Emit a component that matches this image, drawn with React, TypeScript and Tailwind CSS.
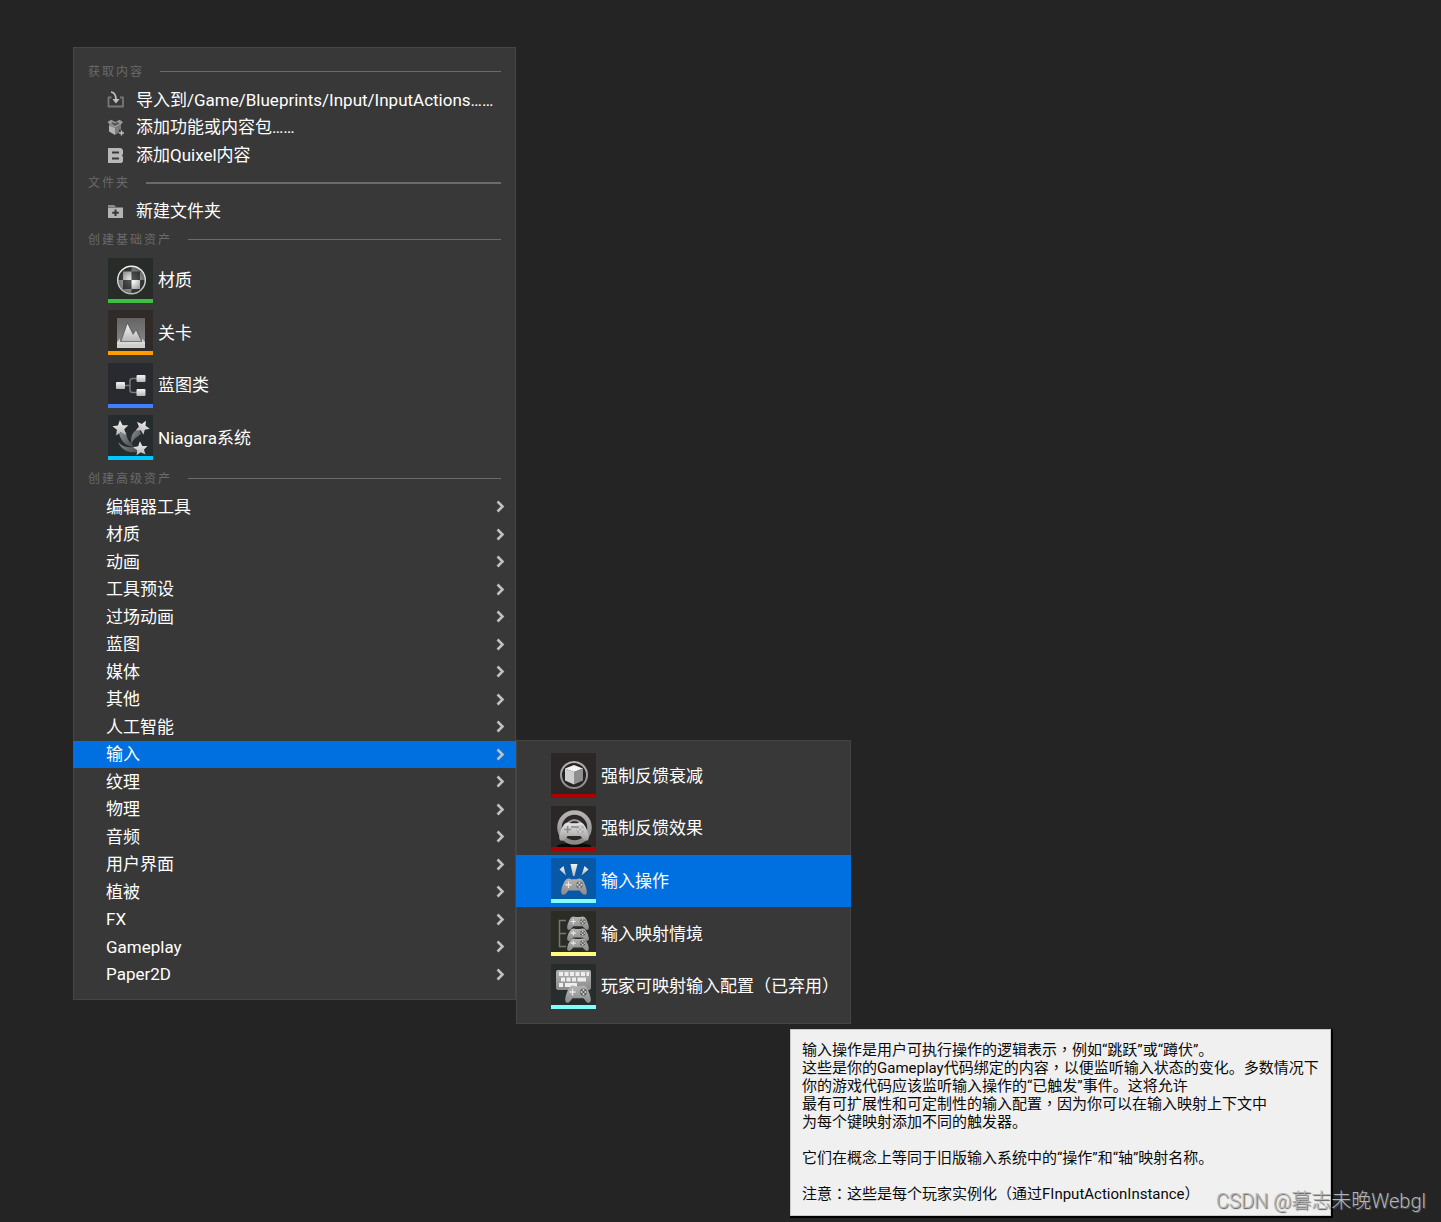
import React, { ReactNode } from "react";

function Gradients() {
  return (
    <svg className="absolute size-0" aria-hidden="true">
      <defs>
        <linearGradient id="silver" x1="0" y1="0" x2="0" y2="1">
          <stop offset="0" stopColor="#b4b4b4" />
          <stop offset="1" stopColor="#8a8a8a" />
        </linearGradient>
        <linearGradient id="bright" x1="0" y1="0" x2="0" y2="1">
          <stop offset="0" stopColor="#f4f4f4" />
          <stop offset="1" stopColor="#b8b8b8" />
        </linearGradient>
        <linearGradient id="shell" x1="0" y1="0" x2="0" y2="1">
          <stop offset="0" stopColor="#e6e6e6" />
          <stop offset="1" stopColor="#9c9c9c" />
        </linearGradient>
        <linearGradient id="frame" x1="0" y1="0" x2="0" y2="1">
          <stop offset="0" stopColor="#646464" />
          <stop offset="1" stopColor="#8c8c8c" />
        </linearGradient>
        <radialGradient id="gloss" cx=".5" cy=".5" r=".5">
          <stop offset=".2" stopColor="#000000" stopOpacity="0" />
          <stop offset="1" stopColor="#000000" stopOpacity=".45" />
        </radialGradient>
        <linearGradient id="trail" x1="0" y1="0" x2="1" y2="1">
          <stop offset="0" stopColor="#8c9090" />
          <stop offset="1" stopColor="#454a4c" />
        </linearGradient>
      </defs>
    </svg>
  );
}

type PadProps = { x: number; y: number; w: number; h: number; bg: string; fill?: string; mark?: string };

function Pad({ x, y, w, h, bg, fill = "url(#silver)", mark = "#e6e6e6" }: PadProps) {
  return (
    <svg x={x} y={y} width={w} height={h} viewBox="0 0 26 16" preserveAspectRatio="none">
      <path
        d="M5 1.5C6.500 .3 9 .2 10 1.200H16C17 .2 19.500 .3 21 1.500C23.500 4 25.500 9.500 25.800 12.500C26 16 23.500 16.800 21.300 14.800L18.500 11.800H7.500L4.700 14.800C2.500 16.800 0 16 .2 12.500C.5 9.500 2.500 4 5 1.500Z"
        fill={fill}
      />
      <path d="M7.500 3.300V9.300M4.500 6.300H10.500" stroke={mark} strokeWidth="1.300" />
      <circle cx="18.500" cy="6.300" r="3.300" fill={bg} />
      <g fill="#d8d8d8">
        <circle cx="18.500" cy="4.400" r="1" />
        <circle cx="18.500" cy="8.200" r="1" />
        <circle cx="16.600" cy="6.300" r="1" />
        <circle cx="20.400" cy="6.300" r="1" />
      </g>
    </svg>
  );
}

const STAR = "M0-8L2.300-2.700L8-2.200L3.700 1.600L5 7.200L0 4.200L-5 7.200L-3.700 1.600L-8-2.200L-2.300-2.700Z";

const art = {
  material: (
    <>
      <clipPath id="ball">
        <circle cx="23.500" cy="22" r="13" />
      </clipPath>
      <g clipPath="url(#ball)">
        <rect x="8" y="8" width="30" height="30" fill="#4c504e" />
        <rect x="15" y="13.500" width="8.500" height="8.500" fill="#dcdcdc" />
        <rect x="23.500" y="22" width="8.500" height="9" fill="#f4f4f4" />
        <rect x="8" y="22" width="7" height="9" fill="#c5c5c5" />
        <rect x="32" y="13.500" width="7" height="8.500" fill="#b8b8b8" />
        <rect x="23.500" y="7" width="8.500" height="6.500" fill="#a8a8a8" />
        <rect x="15" y="31" width="8.500" height="7" fill="#c0c0c0" />
        <circle cx="23.500" cy="22" r="13.500" fill="url(#gloss)" />
      </g>
      <circle cx="23.500" cy="22" r="13.800" fill="none" stroke="url(#bright)" strokeWidth="1.500" />
    </>
  ),
  level: (
    <>
      <rect x="9" y="8" width="28" height="29" fill="url(#frame)" />
      <path d="M9 32L12 28.500V32H34V28.500L37 32V38H9Z" fill="#cfcfcf" />
      <path d="M9 33H37" stroke="#e4e4e4" />
      <path d="M12 31.500H34.500L29 19L25 22L19.500 11.500Z" fill="#5a5a5a" opacity=".5" />
      <path d="M13.500 31L19.500 14L25 25L28 20.500L33 31Z" fill="url(#bright)" />
    </>
  ),
  blueprint: (
    <>
      <path d="M17 22.500H22M29 15.500H24.500Q22 15.500 22 18V27Q22 29.500 24.500 29.500H29" fill="none" stroke="#77777b" strokeWidth="1.500" />
      <g fill="url(#bright)">
        <rect x="8" y="19" width="9" height="7" rx="1" />
        <rect x="28.500" y="12" width="9" height="7" rx="1" />
        <rect x="28.500" y="26" width="9" height="7" rx="1" />
      </g>
    </>
  ),
  niagara: (
    <>
      <path d="M11 18C13 27 18 31 26 32L24 29C20 26 18.500 22 18 17Z" fill="url(#trail)" />
      <path d="M31 14C25 16 22 21 23.500 29C25 24 29 22 33 19Z" fill="url(#trail)" />
      <path d="M10 27C14 36 22 39 31 36.500L28 31.500C21 33.500 14 32 10 27Z" fill="url(#trail)" />
      <g fill="url(#bright)">
        <path d={STAR} transform="translate(12.500 13) rotate(-4)" />
        <path d={STAR} transform="translate(34.500 12) rotate(28) scale(.9)" />
        <path d={STAR} transform="translate(32.500 33.500) rotate(-5) scale(.9)" />
      </g>
    </>
  ),
  attenuation: (
    <>
      <circle cx="23" cy="22" r="13" fill="#262323" stroke="url(#silver)" strokeWidth="2" />
      <path d="M23 12L32 15.500L23 19L14 15.500Z" fill="#f4f4f4" />
      <path d="M14 15.500L23 19V31.500L14 27.500Z" fill="#cfcfcf" />
      <path d="M32 15.500L23 19V31.500L32 27.500Z" fill="#8f8f8f" />
    </>
  ),
  effect: (
    <>
      <ellipse cx="23" cy="40" rx="17" ry="3" fill="#0b0909" />
      <circle cx="23.500" cy="21.500" r="15" fill="none" stroke="url(#silver)" strokeWidth="4.500" />
      <path d="M15 20C16 11 31 11 32 20Z" fill="#9a9a9a" />
      <path d="M19 17C20.500 14.500 26.500 14.500 28 17Z" fill="#2c2727" />
      <Pad x={8} y={16} w={30} h={19} bg="#a8a8a8" fill="url(#shell)" mark="#8a8a8a" />
      <path d="M20 21H27" stroke="#8a8a8a" strokeWidth="1.500" />
    </>
  ),
  action: (
    <>
      <g fill="url(#bright)">
        <path d="M19.500 6H26.500L23.500 18H22Z" />
        <path d="M8.500 11.500L12.500 8L15 17.500Z" />
        <path d="M33.500 8L37.500 11.500L30.500 17.500Z" />
      </g>
      <Pad x={10} y={20} w={26} h={17} bg="#626a70" />
    </>
  ),
  mapping: (
    <>
      <path d="M15 9.500H8.500V35.500H15M8.500 22.500H15" fill="none" stroke="#77776f" strokeWidth="1.500" />
      <Pad x={16} y={27} w={22} h={13} bg="#55554f" />
      <Pad x={16} y={17} w={22} h={13} bg="#55554f" />
      <Pad x={16} y={5} w={22} h={14} bg="#55554f" />
    </>
  ),
  config: (
    <>
      <rect x="5" y="6" width="35" height="20" rx="2" fill="url(#silver)" />
      <path d="M8 10H38M10 15.500H29M8 21H12" stroke="#eeeeee" strokeWidth="4" strokeDasharray="4 1.500" />
      <path d="M29 15.500H35M14 21H26" stroke="#eeeeee" strokeWidth="4" />
      <Pad x={14} y={21} w={26} h={18} bg="#4f5555" />
    </>
  ),
};

type AssetItem = { label: string; art: ReactNode; tile: string; bar: string; active?: boolean };

const basicAssets: AssetItem[] = [
  { label: "材质", art: art.material, tile: "bg-[#272c29]", bar: "bg-[#40c040]" },
  { label: "关卡", art: art.level, tile: "bg-[#302b28]", bar: "bg-[#ff9c00]" },
  { label: "蓝图类", art: art.blueprint, tile: "bg-[#282a30]", bar: "bg-[#4080ff]" },
  { label: "Niagara系统", art: art.niagara, tile: "bg-[#262c2e]", bar: "bg-[#00c8ff]" },
];

const inputAssets: AssetItem[] = [
  { label: "强制反馈衰减", art: art.attenuation, tile: "bg-[#2c2727]", bar: "bg-[#af0000]" },
  { label: "强制反馈效果", art: art.effect, tile: "bg-[#2c2727]", bar: "bg-[#af0000]" },
  { label: "输入操作", art: art.action, tile: "bg-[#0858a8]", bar: "bg-[#7fffff]", active: true },
  { label: "输入映射情境", art: art.mapping, tile: "bg-[#2c2c27]", bar: "bg-[#ffff7f]" },
  { label: "玩家可映射输入配置（已弃用）", art: art.config, tile: "bg-[#272c2c]", bar: "bg-[#7fffff]" },
];

const categories = [
  "编辑器工具", "材质", "动画", "工具预设", "过场动画", "蓝图", "媒体", "其他", "人工智能",
  "输入", "纹理", "物理", "音频", "用户界面", "植被", "FX", "Gameplay", "Paper2D",
];

function Section({ title, height = "h-[29px]", line = "h-px" }: { title: string; height?: string; line?: string }) {
  return (
    <div className={`flex items-center gap-4 px-[15px] ${height}`}>
      <h2 className="text-xs tracking-[2px] whitespace-nowrap text-[#6a6a6a]">{title}</h2>
      <div className={`flex-1 bg-[#6b6b6b] ${line}`} />
    </div>
  );
}

function IconItem({ label, children }: { label: string; children: ReactNode }) {
  return (
    <button type="button" className="flex w-full items-center gap-3 pl-[34px] text-left whitespace-nowrap">
      <svg viewBox="0 0 17 17" className="size-[17px] shrink-0" aria-hidden="true">
        {children}
      </svg>
      {label}
    </button>
  );
}

function AssetRow({ item }: { item: AssetItem }) {
  return (
    <button
      type="button"
      className={`flex w-full items-center gap-[5px] pl-[35px] text-left whitespace-nowrap ${item.active ? "bg-[#0070e0]" : ""}`}
    >
      <span className={`flex size-[45px] shrink-0 flex-col justify-end ${item.tile}`}>
        <svg viewBox="0 0 45 41" className="h-[41px] w-[45px]" aria-hidden="true">
          {item.art}
        </svg>
        <span className={`h-1 ${item.bar}`} />
      </span>
      {item.label}
    </button>
  );
}

function InputSubmenu() {
  return (
    <div className="absolute -top-px left-full grid h-[284px] w-[335px] auto-rows-fr bg-[#383838] pt-[10px] pb-[11px] shadow-[inset_0_0_0_1px_#454545]">
      {inputAssets.map((item) => (
        <AssetRow key={item.label} item={item} />
      ))}
    </div>
  );
}

/* Full-width comma and colon are centred in their cell. */
function Mid({ children }: { children: string }) {
  return (
    <span lang="zh-TW" className="font-[Roboto,'Noto_Sans_CJK_TC',sans-serif]">
      {children}
    </span>
  );
}

function Tooltip() {
  return (
    <div
      role="tooltip"
      className="absolute top-[1029px] left-[790px] border border-[#c8c8c8] bg-[#f0f0f0] px-[11px] pt-[11px] pb-3 text-[15px] leading-[18px] whitespace-nowrap text-[#0a0a0a] shadow-[1px_1px_0_1px_#000000]"
    >
      <p>输入操作是用户可执行操作的逻辑表示<Mid>，</Mid>例如“跳跃”或“蹲伏”。</p>
      <p>这些是你的Gameplay代码绑定的内容<Mid>，</Mid>以便监听输入状态的变化。多数情况下</p>
      <p>你的游戏代码应该监听输入操作的“已触发”事件。这将允许</p>
      <p>最有可扩展性和可定制性的输入配置<Mid>，</Mid>因为你可以在输入映射上下文中</p>
      <p>为每个键映射添加不同的触发器。</p>
      <br />
      <p>它们在概念上等同于旧版输入系统中的“操作”和“轴”映射名称。</p>
      <br />
      <p>注意<Mid>：</Mid>这些是每个玩家实例化（通过FInputActionInstance）</p>
    </div>
  );
}

export default function App() {
  return (
    <main
      lang="zh-CN"
      className="relative min-h-screen overflow-hidden bg-[#242424] pt-[47px] pl-[73px] font-[Roboto,'Noto_Sans_CJK_SC',sans-serif] text-[17px] leading-6 text-white"
    >
      <Gradients />
      <nav className="w-[443px] bg-[#383838] pt-[10px] pb-3 shadow-[inset_0_0_0_1px_#454545]">
        <Section title="获取内容" />
        <div className="grid h-[83px] auto-rows-fr">
          <IconItem label="导入到/Game/Blueprints/Input/InputActions……">
            <path d="M4.500 6.500H1.500V15.500H16V6.500H13" fill="none" stroke="#777777" strokeWidth="1.800" strokeLinejoin="round" />
            <path d="M4 1C7.500 1.500 9 4 9 9" fill="none" stroke="#c0c0c0" strokeWidth="1.700" />
            <path d="M5.500 8H12.500L9 12.500Z" fill="#c0c0c0" />
          </IconItem>
          <IconItem label="添加功能或内容包……">
            <path d="M2 6L8 9V16L2 12.500Z" fill="#b4b4b4" />
            <path d="M8 9L14 6V10.500H12V13.500L8 16Z" fill="#7c7c7c" />
            <path d="M.5 3L4 .8L8.500 3L12.500 .8L16 3L13.500 6L8 9L3 6Z" fill="#9a9a9a" />
            <path d="M4 4.500L6 3L8 4.500L10.500 3L12.500 4.500L8 7Z" fill="#555555" />
            <path d="M14.500 11.500V16.500M12 14H17" stroke="#c0c0c0" strokeWidth="1.500" />
          </IconItem>
          <IconItem label="添加Quixel内容">
            <path fillRule="evenodd" d="M1 1H14L16 3V7L15 8.500L16 10V14.500L14.500 16H1ZM5 4.500V6.500H12V4.500ZM5 10.500V12.500H12V10.500Z" fill="#b8b8b8" />
          </IconItem>
        </div>
        <Section title="文件夹" height="h-7" line="h-0.5" />
        <div className="grid h-7">
          <IconItem label="新建文件夹">
            <path d="M1 2H7L9 4H1Z" fill="#8c8c8c" />
            <path d="M1 4.500H16V15H1Z" fill="#b4b4b4" />
            <path d="M8.500 6.500V13M5.200 9.700H11.800" stroke="#383838" strokeWidth="2" />
          </IconItem>
        </div>
        <Section title="创建基础资产" />
        <div className="grid h-[210px] auto-rows-fr">
          {basicAssets.map((item) => (
            <AssetRow key={item.label} item={item} />
          ))}
        </div>
        <Section title="创建高级资产" />
        <ul className="grid h-[495px] auto-rows-fr">
          {categories.map((name) => (
            <li key={name} className="relative grid">
              <button
                type="button"
                className={`flex w-full items-center justify-between pr-[11px] pl-[33px] text-left ${name === "输入" ? "bg-[#0070e0]" : ""}`}
              >
                {name}
                <svg viewBox="0 0 9 13" className="h-[13px] w-[9px]" aria-hidden="true">
                  <path d="M1.500 1.500L6.500 6.500L1.500 11.500" fill="none" stroke="#c0c0c0" strokeWidth="2.600" />
                </svg>
              </button>
              {name === "输入" && <InputSubmenu />}
            </li>
          ))}
        </ul>
      </nav>
      <Tooltip />
      <p className="absolute right-[15px] bottom-[9px] text-xl leading-6 font-light text-[#b4b4b4] [text-shadow:1px_1px_1px_#555555]">
        CSDN @暮志未晚Webgl
      </p>
    </main>
  );
}
